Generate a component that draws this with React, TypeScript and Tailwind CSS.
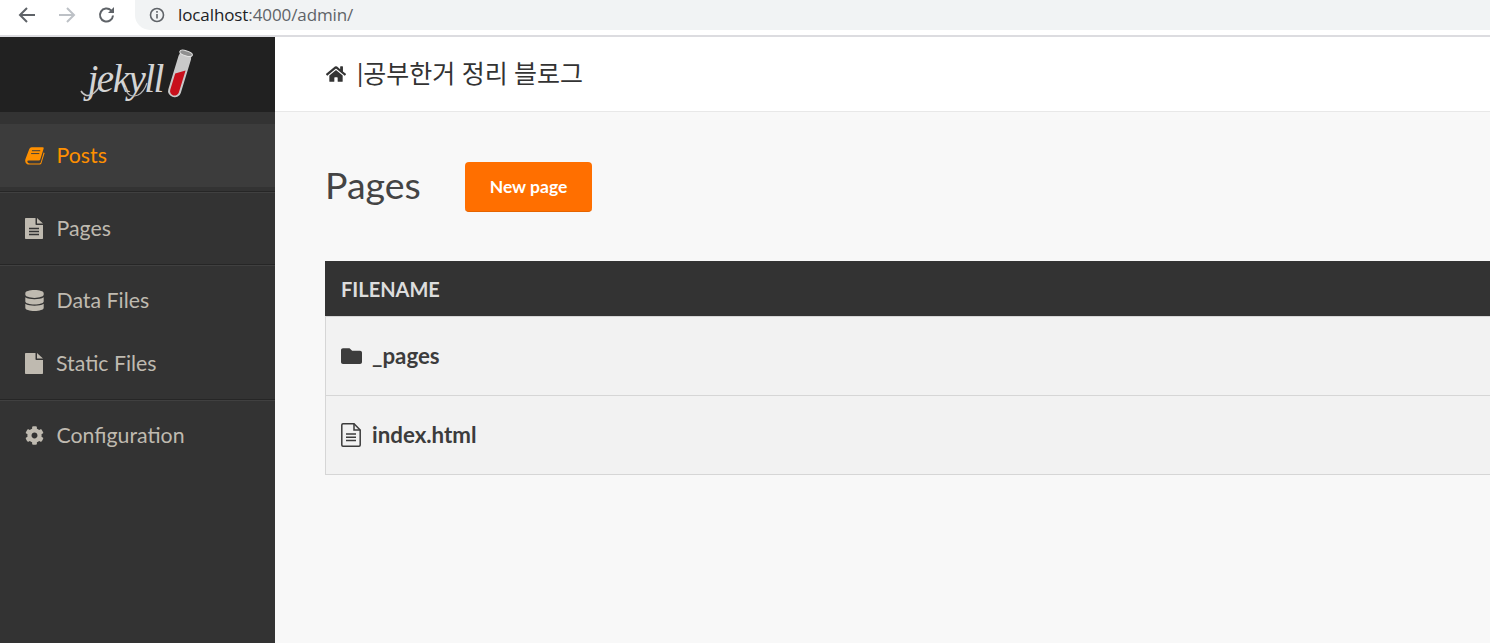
import type { ReactNode } from "react";
import { FaCog, FaDatabase, FaFolder, FaHome } from "react-icons/fa";

const LATO = "font-['Lato','Noto_Sans_CJK_KR',sans-serif]";

function BookIcon() {
  return (
    <svg width="20" height="18" viewBox="0 0 21 18.500" fill="currentColor">
      <path d="M7 0H18.500Q20 0 19.600 1.500L16 13Q15.800 14 14.500 14H4Q2 14 2.500 15.500Q3 17 5 17H15Q16 17 16.500 16L19.500 5.500L20.600 6L17.200 17.200Q16.800 18.300 15.500 18.300H4.500Q1 18.300 .3 15Q0 14 .5 12.500L4.500 2Q5.200 0 7 0Z" />
      <path d="M7.300 3.700H16M6.400 6.700H15" stroke="#3c3c3c" strokeWidth="1" />
    </svg>
  );
}

function FileIcon({ lines }: { lines?: boolean }) {
  return (
    <svg width="18" height="21" viewBox="0 0 18 21" fill="currentColor">
      <path d="M0 .8Q0 0 .8 0H10.500V6.200Q10.500 7 11.300 7H18V20.200Q18 21 17.200 21H.8Q0 21 0 20.200Z" />
      <path d="M12 0L18 5.500H12Z" />
      {lines && <path d="M4 10.500H14M4 13.500H14M4 16.500H14" stroke="#333333" strokeWidth="1.300" />}
    </svg>
  );
}

function FileOutlineIcon() {
  return (
    <svg width="20" height="24" viewBox="0 0 20 24" fill="none" stroke="currentColor" strokeWidth="1.500">
      <path d="M2 .8H13L19.200 7V22Q19.200 23.200 18 23.200H2Q.8 23.200 .8 22V2Q.8 .8 2 .8Z" />
      <path d="M13 .8V7H19.200" />
      <path d="M5 11H15M5 14.200H15M5 17.400H15" />
    </svg>
  );
}

function NavItem({ icon, label, active, tight }: { icon: ReactNode; label: string; active?: boolean; tight?: boolean }) {
  return (
    <li
      className={`flex h-[63px] items-center pl-[25px] text-[21.300px] ${active ? "bg-[#3c3c3c] text-[#ff9000]" : "text-[#bfbab0]"}`}
    >
      <span className={`flex w-[20px] justify-start ${tight ? "mr-[11px]" : "mr-[11.500px]"}`}>{icon}</span>
      {label}
    </li>
  );
}

function Divider({ short }: { short?: boolean }) {
  return (
    <li
      className={`mt-[4px] h-[2px] border-t border-b border-t-[#262626] border-b-[#404040] ${short ? "mb-[3px]" : "mb-[4px]"}`}
    />
  );
}

function Row({ icon, name, first }: { icon: ReactNode; name: string; first?: boolean }) {
  return (
    <div
      className={`flex items-center border-b border-l border-[#d6d6d6] bg-[#f2f2f2] pl-[15px] text-[22.300px] font-bold text-[#3c3c3c] ${first ? "h-[80px] border-t" : "h-[79px]"}`}
    >
      <span className="mr-[10px] flex w-[21px] justify-start">{icon}</span>
      {name}
    </div>
  );
}

function JekyllLogo() {
  return (
    <div className="relative flex h-[52px] w-[116px] items-center">
      <span className="ml-[8px] mt-[8px] font-['Liberation_Serif',serif] text-[39px] leading-none tracking-[-1.500px] text-[#d4d4d4] italic">
        jekyll
      </span>
      <svg className="absolute top-0 left-0" width="116" height="52" viewBox="0 0 116 52" fill="none">
        <path d="M1 42Q6 50 14 44Q19 40 21 33" stroke="#c4c4c4" strokeWidth="1.500" />
        <path d="M45 38Q48 50 58 46Q64 43 67 34" stroke="#b5b5b5" strokeWidth="1.200" />
        <g transform="rotate(17 100 26)">
          <rect x="93" y="2" width="13" height="47" rx="6" fill="#c9c9c9" />
          <path d="M95 26L104 20V43a4.500 4.500 0 0 1-9 0Z" fill="#c8101c" />
          <ellipse cx="99.500" cy="3.500" rx="6.500" ry="2.500" fill="#8f8f8f" stroke="#e2e2e2" />
        </g>
      </svg>
    </div>
  );
}

export default function App() {
  return (
    <div className={`flex h-[643px] w-[1490px] flex-col overflow-hidden bg-white ${LATO}`}>
      {/* browser chrome */}
      <div className="flex h-[37px] shrink-0 items-start border-b-2 border-[#dcdce0] bg-white">
        <div className="flex h-[30px] items-center pl-[17px] text-[#5f6368]">
          <svg width="20" height="20" viewBox="0 0 20 20" fill="none" stroke="currentColor" strokeWidth="2">
            <path d="M18 10H3M10 3l-7 7 7 7" />
          </svg>
          <svg className="ml-[20px] text-[#bdc1c6]" width="20" height="20" viewBox="0 0 20 20" fill="none" stroke="currentColor" strokeWidth="2">
            <path d="M2 10h15M10 3l7 7-7 7" />
          </svg>
          <svg className="ml-[20px]" width="20" height="20" viewBox="0 0 20 20" fill="none" stroke="currentColor" strokeWidth="2">
            <path d="M16 10.500a6.500 6.500 0 1 1-1.900-5.100L16.500 7.500" />
            <path d="M17 2v6h-6" fill="currentColor" stroke="none" />
          </svg>
        </div>
        <div className="ml-[18px] flex h-[30px] flex-1 items-center rounded-bl-[15px] bg-[#f1f3f4] pl-[14px] font-['Open_Sans',sans-serif] text-[17px] text-[#5f6368]">
          <svg width="16" height="16" viewBox="0 0 16 16" fill="none" stroke="#5f6368" strokeWidth="1.600">
            <circle cx="8" cy="8" r="6.500" />
            <path d="M8 7v4.500M8 4v1.800" />
          </svg>
          <span className="ml-[13px] tracking-[-0.100px]">
            <span className="text-[#202124]">localhost</span>:4000/admin/
          </span>
        </div>
      </div>

      <div className="flex min-h-0 flex-1">
        <aside className="flex w-[275px] shrink-0 flex-col bg-[#333333]">
          <div className="flex h-[75px] items-center justify-center bg-[#212121]">
            <JekyllLogo />
          </div>
          <ul className="pt-[12px]">
            <NavItem icon={<BookIcon />} label="Posts" active />
            <Divider />
            <NavItem icon={<FileIcon lines />} label="Pages" />
            <Divider short />
            <NavItem icon={<FaDatabase className="-ml-[1px] text-[21px]" />} label="Data Files" />
            <NavItem icon={<FileIcon />} label="Static Files" tight />
            <Divider short />
            <NavItem icon={<FaCog className="text-[19px]" />} label="Configuration" />
          </ul>
        </aside>

        <main className="flex min-w-0 flex-1 flex-col bg-[#f8f8f8]">
          <header className="flex h-[75px] shrink-0 items-center border-b border-[#e8e8e8] bg-white pl-[51px] text-[25px] text-[#333333]">
            <FaHome className="mr-[11px] text-[20px]" />
            <span>|공부한거 정리 블로그</span>
          </header>
          <div className="pl-[50px]">
            <div className="mt-[50px] flex h-[50px] items-center">
              <h1 className="-mt-[4px] w-[140px] text-[37.500px] font-normal text-[#444444]">Pages</h1>
              <button className="h-[50px] w-[127px] rounded-[4px] border-b border-[#e56400] bg-[#ff6f00] pt-[1px] text-[17.500px] font-bold text-white">
                New page
              </button>
            </div>
            <div className="mt-[49px]">
              <div className="flex h-[55px] items-center bg-[#333333] pl-[16px] pt-[1px] text-[20px] font-bold text-[#dddddd]">FILENAME</div>
              <Row icon={<FaFolder className="text-[22px]" />} name="_pages" first />
              <Row icon={<FileOutlineIcon />} name="index.html" />
            </div>
          </div>
        </main>
      </div>
    </div>
  );
}
